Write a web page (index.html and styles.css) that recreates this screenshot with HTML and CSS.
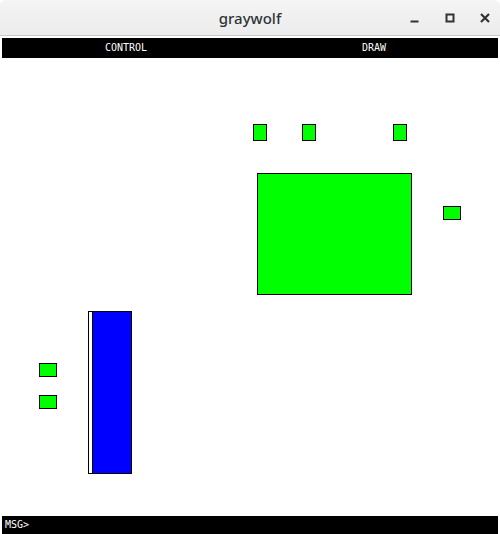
FILE: index.html
```html
<!DOCTYPE html>
<html>
<head>
<meta charset="utf-8">
<link rel="stylesheet" href="styles.css">
</head>
<body>
<div class="window">
  <header class="titlebar">
    <span class="title">graywolf</span>
    <div class="controls">
      <span class="btn"><svg width="12" height="12" viewBox="0 0 12 12"><rect x="1.5" y="8.5" width="8" height="2" fill="#2e3436"/></svg></span>
      <span class="btn"><svg width="12" height="12" viewBox="0 0 12 12"><rect x="2.5" y="2.5" width="7" height="7" fill="none" stroke="#2e3436" stroke-width="2"/></svg></span>
      <span class="btn"><svg width="12" height="12" viewBox="0 0 12 12"><path d="M2 2 L10 10 M10 2 L2 10" stroke="#2e3436" stroke-width="2.2"/></svg></span>
    </div>
  </header>
  <nav class="menubar">
    <span class="menu">CONTROL</span>
    <span class="menu">DRAW</span>
  </nav>
  <main class="canvas">
    <div class="cell pin" style="left:253px;top:66px;"></div>
    <div class="cell pin" style="left:302px;top:66px;"></div>
    <div class="cell pin" style="left:393px;top:66px;"></div>
    <div class="cell big" style="left:257px;top:115px;"></div>
    <div class="cell pad" style="left:443px;top:148px;"></div>
    <div class="cell pad" style="left:39px;top:305px;"></div>
    <div class="cell pad" style="left:39px;top:337px;"></div>
    <div class="block" style="left:88px;top:253px;">
      <div class="strip"></div>
      <div class="fill"></div>
    </div>
  </main>
  <footer class="msgbar">MSG&gt;</footer>
</div>
</body>
</html>
```

FILE: styles.css
```css
html, body {
  margin: 0;
  padding: 0;
  width: 500px;
  height: 534px;
  overflow: hidden;
  background: #ffffff;
}
.window {
  display: flex;
  flex-direction: column;
  width: 500px;
  height: 534px;
  background: #ffffff;
}
.titlebar {
  position: relative;
  height: 35px;
  flex: 0 0 35px;
  background: linear-gradient(#f4f4f4, #ececec);
  border-bottom: 1px solid #c9c9c9;
  border-radius: 6px 6px 0 0;
  display: flex;
  align-items: center;
  justify-content: center;
}
.title {
  font-family: "Noto Sans", "DejaVu Sans", sans-serif;
  font-size: 15px;
  font-weight: 500;
  color: #2e3436;
  margin-top: 1px;
}
.controls {
  position: absolute;
  right: 9px;
  top: 12px;
  display: flex;
  gap: 23px;
}
.btn {
  width: 12px;
  height: 12px;
  display: block;
}
.btn svg { display: block; }
.menubar {
  margin: 2px 2px 0 2px;
  height: 20px;
  flex: 0 0 20px;
  background: #000000;
  display: flex;
}
.menu {
  flex: 1;
  text-align: center;
  color: #ffffff;
  font-family: "DejaVu Sans Mono", monospace;
  font-size: 10px;
  line-height: 20px;
  transform: scaleY(1.1);
}
.canvas {
  position: relative;
  flex: 1;
}
.cell {
  position: absolute;
  box-sizing: border-box;
  background: #00ff00;
  border: 1px solid #000000;
}
.pin { width: 14px; height: 17px; }
.pad { width: 18px; height: 14px; }
.big { width: 155px; height: 122px; }
.block {
  position: absolute;
  width: 44px;
  height: 163px;
  display: flex;
  box-sizing: border-box;
  border: 1px solid #000000;
}
.strip {
  width: 3px;
  background: #ffffff;
  border-right: 1px solid #000000;
}
.fill {
  flex: 1;
  background: #0000ff;
}
.msgbar {
  margin: 0 2px;
  height: 18px;
  flex: 0 0 18px;
  background: #000000;
  color: #ffffff;
  font-family: "DejaVu Sans Mono", monospace;
  font-size: 10px;
  line-height: 18px;
  padding-left: 3px;
}
```
